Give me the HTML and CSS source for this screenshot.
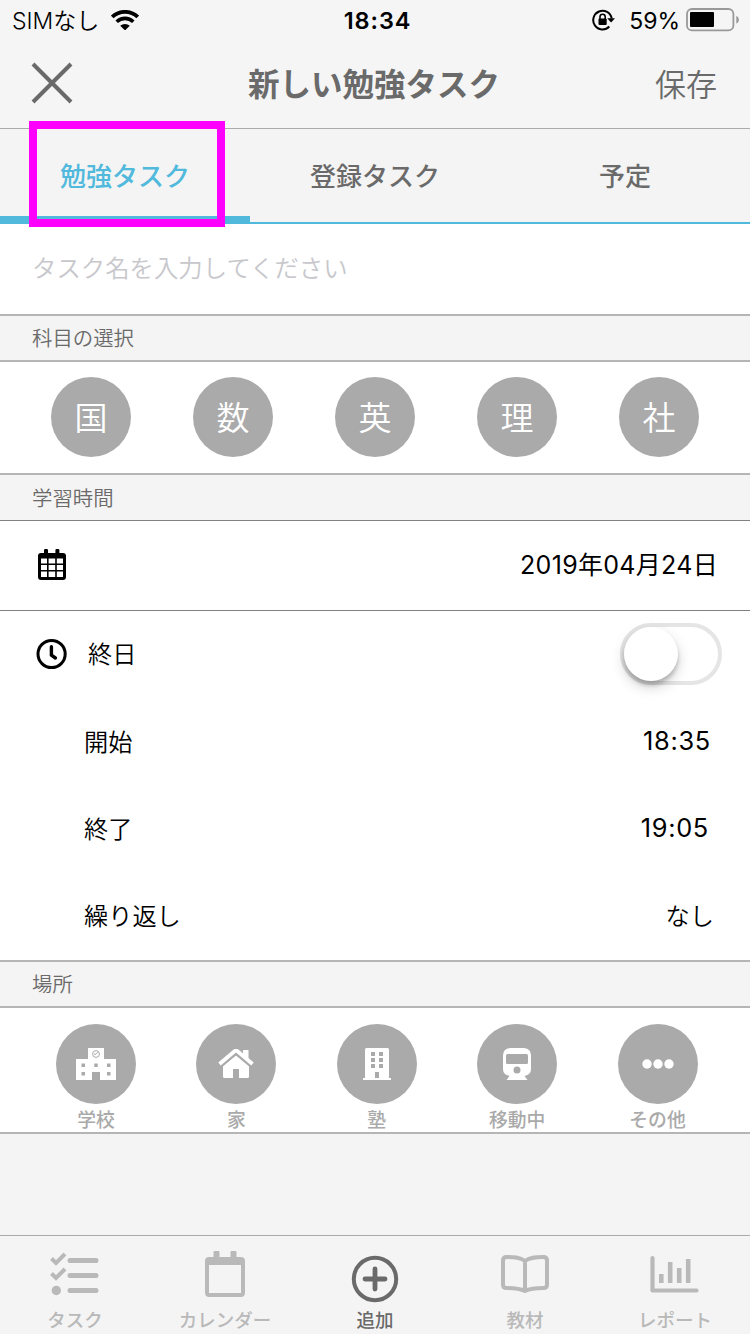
FILE: index.html
```
<!DOCTYPE html>
<html lang="ja">
<head>
    <meta charset="UTF-8">
    <meta name="viewport" content="width=device-width, initial-scale=1.0">
    <title>新しい勉強タスク</title>
    <link rel="stylesheet" href="styles.css">
</head>
<body>
    <div class="status-bar">
        <div class="status-left">
            <span class="carrier">SIMなし</span>
            <svg class="wifi" width="28" height="20" viewBox="0 0 28 20">
                <path d="M1.300 7a18.200 18.200 0 0 1 25.400 0" fill="none" stroke="#000" stroke-width="3.800"/>
                <path d="M5.700 11.700a12 12 0 0 1 16.600 0" fill="none" stroke="#000" stroke-width="3.600"/>
                <path d="M9.200 15.800a7 7 0 0 1 9.600 0L14 20.400z"/>
            </svg>
        </div>
        <div class="status-time">18:34</div>
        <div class="status-right">
            <svg width="24" height="22" viewBox="0 0 24 22">
                <path d="M17.300 17.500A9.300 9.300 0 1 1 19.700 9.500" fill="none" stroke="#000" stroke-width="2"/>
                <path d="M15.200 9.200h7.800l-3.900 4.400z"/>
                <path d="M8 10V7.800a2.600 2.600 0 0 1 5.200 0V10" fill="none" stroke="#000" stroke-width="1.600"/>
                <rect x="6.500" y="9.500" width="8.200" height="6.500" rx="1"/>
            </svg>
            <span class="percent">59%</span>
            <svg width="54" height="24" viewBox="0 0 54 24">
                <rect x="1" y="1" width="46.400" height="21.400" rx="5" fill="none" stroke="#999" stroke-width="1.800"/>
                <rect x="4" y="4" width="24" height="15" rx="1"/>
                <path d="M50.300 8c3.400 1 3.400 6.600 0 7.600z" fill="#999"/>
            </svg>
        </div>
    </div>

    <div class="navbar">
        <svg class="close" width="42" height="42" viewBox="0 0 42 42">
            <path d="M2 2l38 38M40 2L2 40" stroke="#6a6a6a" stroke-width="4"/>
        </svg>
        <h1 class="title">新しい勉強タスク</h1>
        <div class="save">保存</div>
    </div>

    <div class="tabs">
        <div class="tab active">勉強タスク<div class="marker"></div></div>
        <div class="tab">登録タスク</div>
        <div class="tab">予定</div>
    </div>

    <div class="task-name">タスク名を入力してください</div>

    <div class="section-header">科目の選択</div>
    <div class="subjects">
        <div class="circle subject">国</div>
        <div class="circle subject">数</div>
        <div class="circle subject">英</div>
        <div class="circle subject">理</div>
        <div class="circle subject">社</div>
    </div>

    <div class="section-header thin">学習時間</div>
    <div class="date-row">
        <svg width="28" height="32" viewBox="0 0 28 32">
            <path fill-rule="evenodd" d="M6 4V1.200Q6 0 7.200 0h1.600Q10 0 10 1.200V4h7.400V1.200q0-1.200 1.200-1.200h1.600q1.200 0 1.200 1.200V4h3.600Q28 4 28 7v21q0 3-3 3H3q-3 0-3-3V7q0-3 3-3zM3 9.500v5h6v-5zm7.600 0v5h6.600v-5zm8.200 0v5H25v-5zM3 16v5h6v-5zm7.600 0v5h6.600v-5zm8.200 0v5H25v-5zM3 22.500V28h6v-5.500zm7.600 0V28h6.600v-5.500zm8.200 0V28H25v-5.500z"/>
        </svg>
        <span class="date">2019年04月24日</span>
    </div>
    <div class="time-group">
        <div class="row all-day">
            <svg width="32" height="32" viewBox="0 0 32 32" fill="none" stroke="#000">
                <circle cx="15.600" cy="16" r="13.600" stroke-width="3"/>
                <path d="M15.400 8.700v8.500l4 2.800" stroke-width="3.400" stroke-linecap="round"/>
            </svg>
            <span class="label all-day-label">終日</span>
            <div class="switch"><div class="knob"></div></div>
        </div>
        <div class="row">
            <span class="label">開始</span>
            <span class="time start">18:35</span>
        </div>
        <div class="row">
            <span class="label">終了</span>
            <span class="time end">19:05</span>
        </div>
        <div class="row">
            <span class="label">繰り返し</span>
            <span class="label">なし</span>
        </div>
    </div>

    <div class="section-header">場所</div>
    <div class="places">
        <div class="place">
            <div class="circle">
                <svg width="40" height="32" viewBox="0 0 40 32">
                    <path fill="#fff" fill-rule="evenodd" d="M0 11h12V0h16v11h12v21H24v-8h-8v8H0zM5.500 15.500V19H9v-3.500zm0 8.500v3.500H9V24zM18.300 15.500V19h3.400v-3.500zM31 15.500V19h3.500v-3.500zm0 8.500v3.500h3.500V24z"/>
                    <circle cx="20" cy="6" r="3.400" fill="none" stroke="#aaa" stroke-width="1"/>
                    <path d="M21.800 4.200L20 6.200h-2" fill="none" stroke="#aaa" stroke-width="1"/>
                </svg>
            </div>
            <span>学校</span>
        </div>
        <div class="place">
            <div class="circle">
                <svg width="36" height="30" viewBox="0 0 36 30">
                    <path fill="#fff" d="M25 1h5.500v12L25 8zM5 17L18 6l13 11v10.500q0 1.500-1.500 1.500H21v-9h-6v9H6.500Q5 29 5 27.500z"/>
                    <path d="M3 17.300L18 4.800 33 17.300" fill="none" stroke="#aaa" stroke-width="2.600"/>
                    <path d="M1.500 15L16.500 2.300q1.500-1.200 3 0L34.500 15" fill="none" stroke="#fff" stroke-width="3.800"/>
                </svg>
            </div>
            <span>家</span>
        </div>
        <div class="place">
            <div class="circle">
                <svg width="28" height="32" viewBox="0 0 28 32">
                    <path fill="#fff" d="M0 30h2V1.500Q2 0 3.500 0h21Q26 0 26 1.500V30h2v2H0z"/>
                    <path fill="#aaa" d="M8 4h4v4H8zm8 0h4v4h-4zM8 10h4v4H8zm8 0h4v4h-4zM8 16h4v4H8zm8 0h4v4h-4zM12 24h4v6h-4z"/>
                </svg>
            </div>
            <span>塾</span>
        </div>
        <div class="place">
            <div class="circle">
                <svg width="28" height="32" viewBox="0 0 28 32">
                    <path fill="#fff" d="M7 0h14q7 0.500 7 7.500V21q0 5.500-6.500 7l3 4h-21l3-4Q0 26.500 0 21V7.500Q0 .5 7 0z"/>
                    <rect x="3" y="6" width="22" height="10" rx="1.500" fill="#aaa"/>
                    <circle cx="14" cy="22" r="3.500" fill="#aaa"/>
                </svg>
            </div>
            <span>移動中</span>
        </div>
        <div class="place">
            <div class="circle">
                <svg width="32" height="10" viewBox="0 0 32 10" fill="#fff">
                    <circle cx="5" cy="5" r="4.700"/>
                    <circle cx="16" cy="5" r="4.700"/>
                    <circle cx="27" cy="5" r="4.700"/>
                </svg>
            </div>
            <span>その他</span>
        </div>
    </div>

    <div class="tabbar">
        <div class="tabbar-item">
            <svg width="50" height="48" viewBox="0 0 50 48" fill="none" stroke="#b9b9b9">
                <path d="M20 10.500h26M20 25.500h26M20 40.500h26" stroke-width="5" stroke-linecap="round"/>
                <path d="M1.500 8.500l4.500 4.500 9-9M1.500 23.500l4.500 4.500 9-9" stroke-width="4"/>
                <circle cx="6.300" cy="40.500" r="4.700" fill="#b9b9b9" stroke="none"/>
            </svg>
            <span>タスク</span>
        </div>
        <div class="tabbar-item">
            <svg width="42" height="48" viewBox="0 0 42 48">
                <path fill="#b9b9b9" fill-rule="evenodd" d="M9.500 7V2q0-1 1-1h4q1 0 1 1v5h11V2q0-1 1-1h4q1 0 1 1v5h4.300q4.200 0 4.200 4.200v31.600q0 4.200-4.200 4.200H5.200Q1 47 1 42.800V11.200Q1 7 5.200 7zM5 15v28h32V15z"/>
            </svg>
            <span>カレンダー</span>
        </div>
        <div class="tabbar-item current">
            <svg width="48" height="54" viewBox="0 0 48 54" fill="none" stroke="#6a6a6a">
                <circle cx="24" cy="29" r="21.200" stroke-width="4"/>
                <path d="M24 19v20M14 29h20" stroke-width="4.800" stroke-linecap="round"/>
            </svg>
            <span>追加</span>
        </div>
        <div class="tabbar-item">
            <svg width="48" height="48" viewBox="0 0 48 48" fill="none" stroke="#b9b9b9" stroke-width="4">
                <path d="M24 11C19 7 12 7 5.500 7Q2 7 2 10.500v24Q2 38 5.500 38C13 38 19 38.500 24 41c5-2.500 11-3 18.500-3q3.500 0 3.500-3.500v-24Q46 7 42.500 7C36 7 29 7 24 11zv30" stroke-linejoin="round"/>
            </svg>
            <span>教材</span>
        </div>
        <div class="tabbar-item">
            <svg width="50" height="48" viewBox="0 0 50 48" fill="none" stroke="#b9b9b9">
                <path d="M2.500 8v32.500H46.500" stroke-width="4.200" stroke-linejoin="round" stroke-linecap="round"/>
                <path d="M11.300 24v9M20.200 12v21M29.200 18v15M38.200 9v24" stroke-width="4.600"/>
            </svg>
            <span>レポート</span>
        </div>
    </div>

    <!-- Tutorial frame over the first tab -->
    <div class="highlight"></div>
</body>
</html>
```
FILE: styles.css
```
* {
    box-sizing: border-box;
}

body {
    position: relative;
    display: flex;
    flex-direction: column;
    width: 750px;
    height: 1334px;
    margin: 0;
    overflow: hidden;
    background: #f4f4f4;
    color: #000;
    font-family: 'Inter', 'Noto Sans CJK JP', sans-serif;
    font-size: 24px;
    font-weight: 350;
    line-height: 1.2;
}

svg {
    display: block;
    flex-shrink: 0;
}

/* Status bar */
.status-bar {
    display: grid;
    grid-template-columns: 1fr auto 1fr;
    align-items: center;
    height: 40px;
    background: #f5f5f5;
    font-size: 23px;
    font-weight: 400;
}

.status-left {
    display: flex;
    align-items: center;
    gap: 12px;
    padding-left: 12px;
}

.carrier {
    padding-top: 3px;
    font-weight: 350;
}

.status-time {
    padding: 3px 0 0 5px;
    font-weight: 600;
    font-size: 23.5px;
    letter-spacing: 0.9px;
}

.status-right {
    display: flex;
    align-items: center;
    justify-content: flex-end;
    padding-right: 10px;
}

.percent {
    padding-top: 3px;
    margin: 0 6px 0 13px;
}

/* Navigation */
.navbar {
    display: grid;
    grid-template-columns: 1fr auto 1fr;
    align-items: center;
    height: 89px;
    padding: 0 33px 2px 31px;
    border-bottom: 1px solid #aaa;
    background: #f5f5f5;
    color: #6a6a6a;
}

.title {
    margin: 0;
    padding-top: 4px;
    font-size: 31.5px;
    font-weight: 700;
}

.save {
    padding-top: 4px;
    font-size: 31px;
    text-align: right;
}

/* Tabs */
.tabs {
    display: flex;
    height: 95px;
    border-bottom: 2px solid #50b9dc;
    color: #6a6a6a;
    font-size: 26px;
    font-weight: 500;
}

.tab {
    position: relative;
    display: flex;
    flex: 1;
    align-items: center;
    justify-content: center;
    padding-top: 3px;
}

.tab.active {
    color: #50b9dc;
}

.marker {
    position: absolute;
    bottom: -2px;
    left: 0;
    width: 100%;
    height: 8px;
    background: #50b9dc;
}

.highlight {
    position: absolute;
    top: 121px;
    left: 29px;
    width: 196px;
    height: 106px;
    border: 8px solid #ff00ff;
}

.task-name {
    display: flex;
    align-items: center;
    height: 90px;
    padding: 0 32px;
    background: #fff;
    color: #c7c7cc;
    font-size: 24.4px;
}

.section-header {
    display: flex;
    align-items: center;
    height: 48px;
    padding: 3px 32px 0;
    border-top: 2px solid #b5b5b5;
    border-bottom: 2px solid #b5b5b5;
    color: #6a6a6a;
    font-size: 20.4px;
}

.section-header.thin {
    border-bottom: 1px solid #808080;
}

/* Subjects */
.subjects {
    display: flex;
    justify-content: space-between;
    height: 111px;
    padding: 15px 51px 0;
    background: #fff;
}

.circle {
    display: flex;
    flex-shrink: 0;
    align-items: center;
    justify-content: center;
    width: 80px;
    height: 80px;
    border-radius: 50%;
    background: #aaa;
    color: #fff;
    font-size: 33px;
}

.subject {
    padding-top: 3px;
}

/* Study time */
.date-row {
    display: flex;
    align-items: center;
    justify-content: space-between;
    height: 90px;
    padding: 0 32px 2px 38px;
    border-bottom: 1px solid #808080;
    background: #fff;
    font-size: 25px;
}

.date {
    letter-spacing: 0.3px;
}

.time-group {
    height: 349px;
    background: #fff;
}

.row {
    display: flex;
    align-items: center;
    justify-content: space-between;
    height: 87px;
    padding: 0 36px 0 84px;
    font-size: 24.2px;
}

.all-day {
    padding: 0 28px 2px 36px;
}

.label {
    padding-top: 3px;
}

.all-day-label {
    flex: 1;
    margin-left: 20px;
}

.time {
    font-size: 25.4px;
    letter-spacing: 0.7px;
}

.start {
    padding-right: 3px;
}

.end {
    padding-right: 5px;
}

.date, .time {
    font-weight: 400;
}

.switch {
    width: 102px;
    height: 62px;
    border: 4px solid #e5e5e5;
    border-radius: 31px;
}

.knob {
    width: 54px;
    height: 54px;
    border-radius: 50%;
    background: #fff;
    box-shadow: 0 6px 14px rgba(0, 0, 0, 0.18), 0 4px 4px rgba(0, 0, 0, 0.2);
}

/* Places */
.places {
    display: flex;
    justify-content: space-between;
    height: 126px;
    padding: 16px 22.5px 0 26px;
    border-bottom: 2px solid #b5b5b5;
    background: #fff;
}

.place {
    display: flex;
    flex-direction: column;
    align-items: center;
    width: 140px;
    color: #aaa;
    font-size: 18.8px;
    font-weight: 500;
}

.place span {
    margin-top: 6px;
    line-height: 22px;
}

/* Bottom bar */
.tabbar {
    display: flex;
    height: 99px;
    margin-top: auto;
    border-top: 1px solid #aaa;
    color: #b9b9b9;
    font-size: 18.5px;
    font-weight: 500;
}

.tabbar-item {
    display: flex;
    flex: 1;
    flex-direction: column;
    align-items: center;
    padding-top: 14px;
}

.tabbar-item span {
    margin-top: 11px;
    line-height: 22px;
}

.tabbar-item.current {
    color: #6a6a6a;
}

.tabbar-item.current span {
    margin-top: 5px;
}
```
